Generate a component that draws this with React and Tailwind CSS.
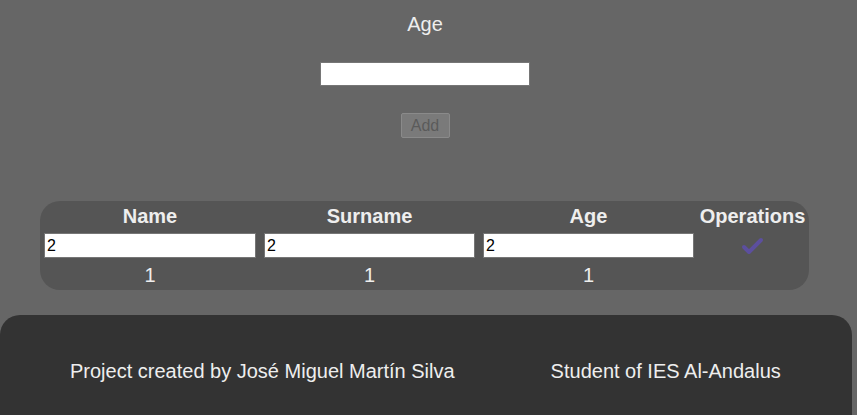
const cols = ["Name", "Surname", "Age", "Operations"];

const App = () => {
  return (
    <div className="min-h-[415px] bg-[#666666] font-['Liberation_Sans',Arial,sans-serif] text-[#eeeeee] overflow-hidden">
      <div className="w-[850px] flex flex-col items-center pt-[13px]">
        <label className="text-[20px] leading-[23px]">Age</label>
        <input
          type="text"
          className="mt-[26px] w-[210px] h-[24px] bg-white border border-[#767676] text-black px-[2px]"
        />
        <button
          disabled
          className="mt-[27px] w-[49px] h-[25px] bg-[#7a7a7a] border border-[#8a8a8a] rounded-[2px] text-[16px] text-[#5a5a5a]"
        >
          Add
        </button>
      </div>

      <div className="mx-[40px] w-[769px] mt-[63px] bg-[#555555] rounded-[20px] pl-[4px] pr-[6px] pt-[4px] pb-[3px]">
        <div className="grid grid-cols-[212px_211px_211px_101px] gap-x-[8px] text-center">
          {cols.map((c) => (
            <div key={c} className="flex justify-center text-[20px] leading-[23px] font-bold whitespace-nowrap">
              <span>{c}</span>
            </div>
          ))}
          <input defaultValue="2" className="mt-[5px] h-[25px] bg-white border border-[#767676] text-black text-[16px] px-[2px]" />
          <input defaultValue="2" className="mt-[5px] h-[25px] bg-white border border-[#767676] text-black text-[16px] px-[2px]" />
          <input defaultValue="2" className="mt-[5px] h-[25px] bg-white border border-[#767676] text-black text-[16px] px-[2px]" />
          <div className="mt-[5px] flex items-center justify-center">
            <svg width="24" height="20" viewBox="0 0 24 20">
              <polyline
                points="3,11 8,16 20,4"
                fill="none"
                stroke="#5c4f9e"
                strokeWidth="4"
                strokeLinecap="round"
                strokeLinejoin="round"
              />
            </svg>
          </div>
          <div className="mt-[6px] text-[20px] leading-[23px]">1</div>
          <div className="mt-[6px] text-[20px] leading-[23px]">1</div>
          <div className="mt-[6px] text-[20px] leading-[23px]">1</div>
          <div></div>
        </div>
      </div>

      <footer className="mt-[25px] w-[852px] h-[120px] bg-[#333333] rounded-t-[20px] flex pl-[70px] gap-[96px] pt-[45px] text-[20px] leading-[23px]">
        <span>Project created by José Miguel Martín Silva</span>
        <span>Student of IES Al-Andalus</span>
      </footer>
    </div>
  );
};

export default App;
